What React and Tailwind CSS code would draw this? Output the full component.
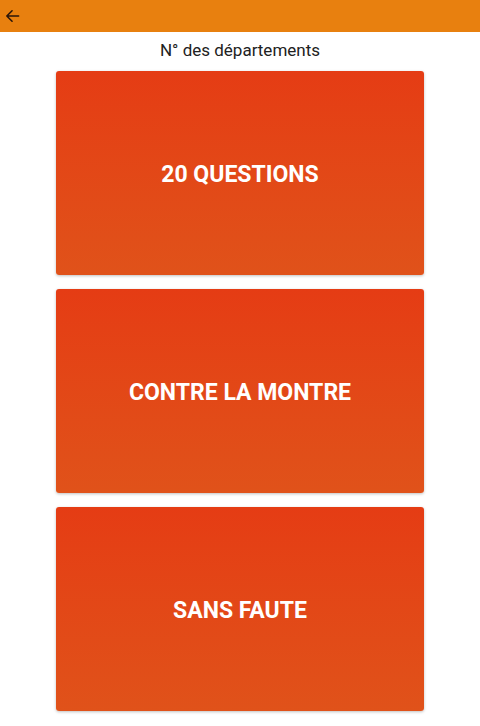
import React from 'react';

const modes = ['20 QUESTIONS', 'CONTRE LA MONTRE', 'SANS FAUTE'];

export default function App() {
  return (
    <div className="min-h-[726px] bg-white font-['Roboto',sans-serif]">
      <div className="flex h-8 items-center bg-[#e8800f] px-[5px]">
        <svg width="15" height="14" viewBox="0 0 16 16" fill="none" stroke="#2a150a" strokeWidth="1.8" strokeLinecap="round" strokeLinejoin="round">
          <path d="M15 8H1.5M7.5 2L1.5 8l6 6" />
        </svg>
      </div>
      <div className="pt-[8px] text-center text-[17px] leading-[20px] text-[#212121]">N° des départements</div>
      <div className="mt-[11px] flex flex-col items-center gap-[14px]">
        {modes.map((m) => (
          <button
            key={m}
            className="flex h-[204px] w-[368px] items-center justify-center rounded-[3px] bg-gradient-to-b from-[#e53c14] to-[#e0521a] pt-[4px] text-[23px] font-bold text-white shadow-[0_1px_3px_rgba(0,0,0,0.25)]"
          >
            {m}
          </button>
        ))}
      </div>
    </div>
  );
}
